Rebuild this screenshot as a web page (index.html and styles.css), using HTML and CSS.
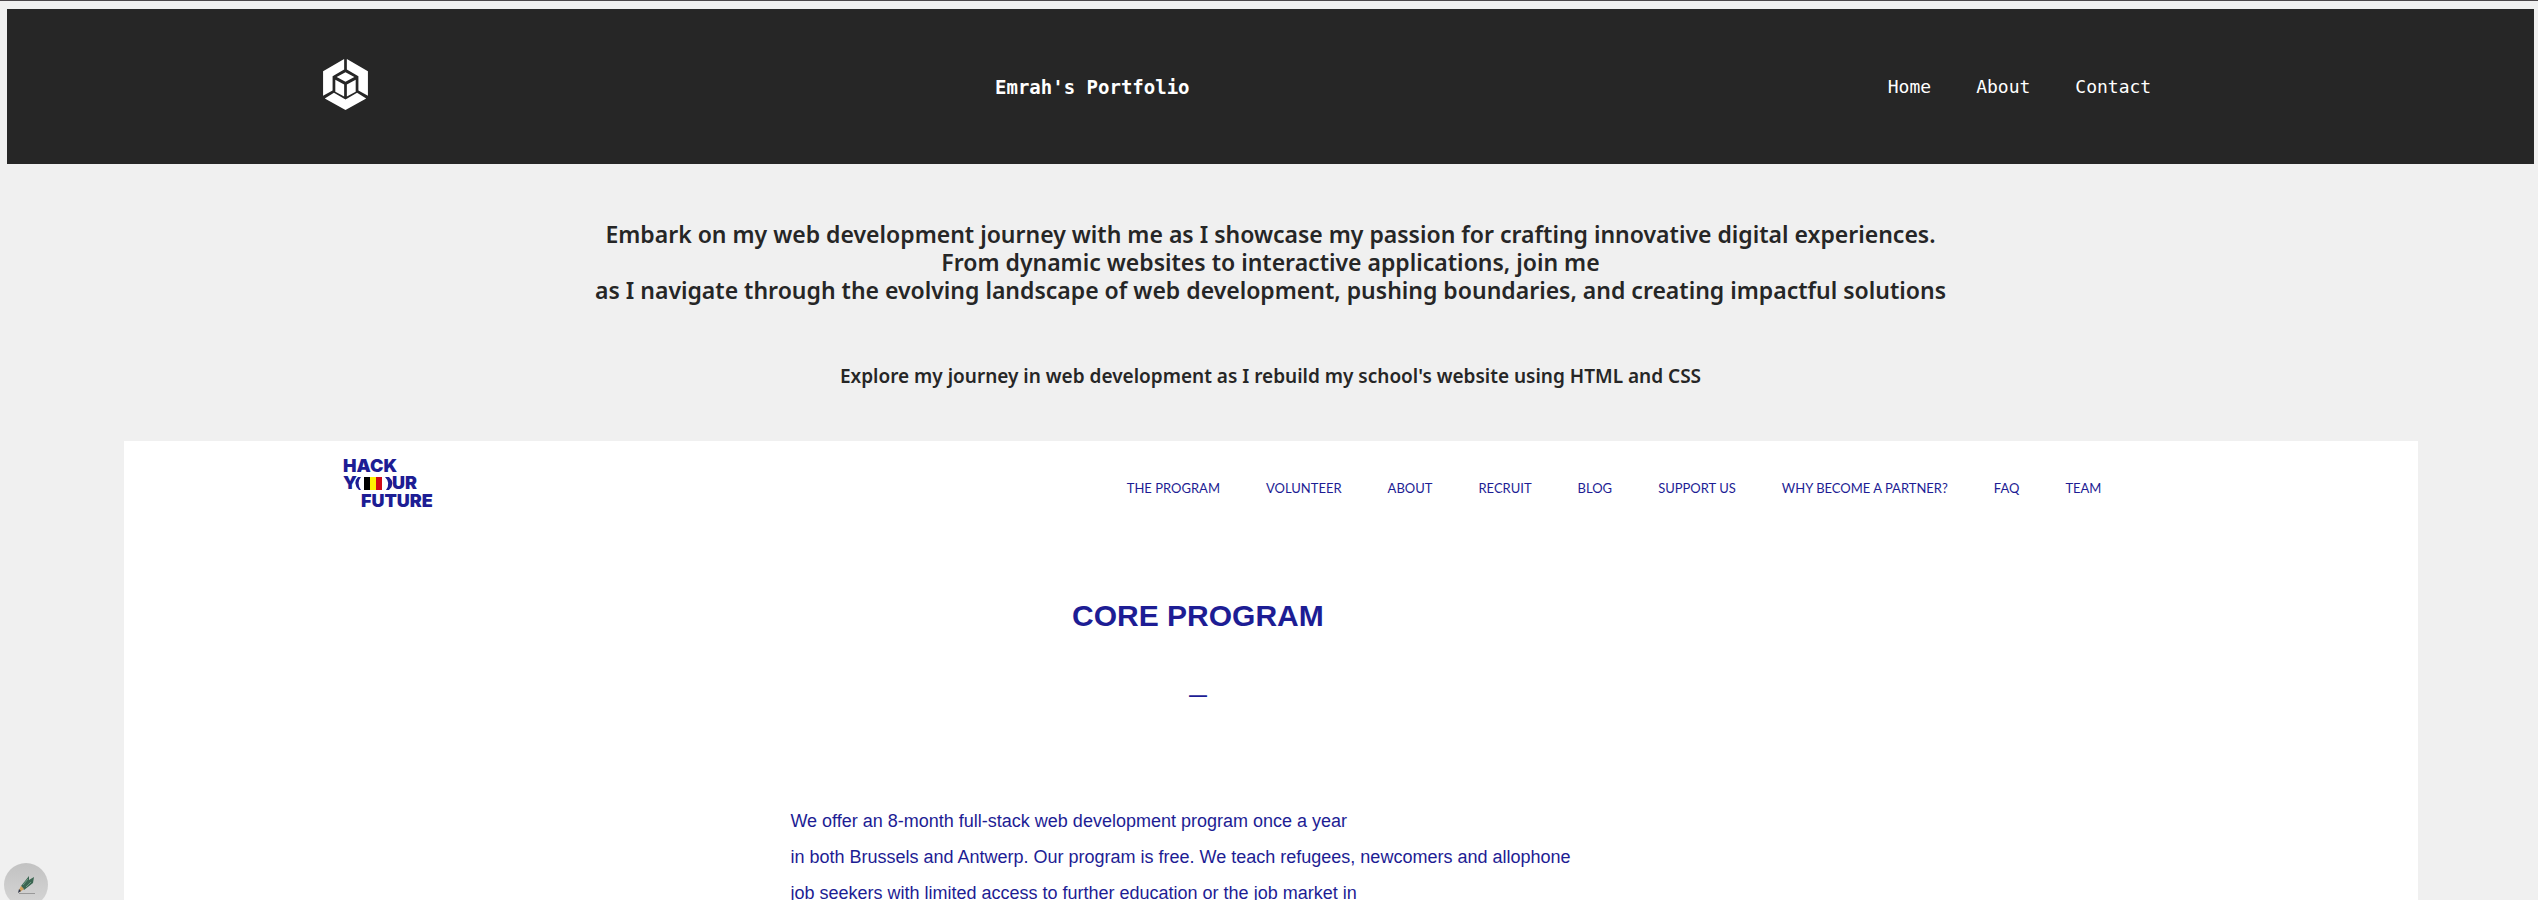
FILE: index.html
```html
<!DOCTYPE html>
<html lang="en">
<head>
<meta charset="utf-8">
<title>Emrah's Portfolio</title>
<link rel="stylesheet" href="styles.css">
</head>
<body>
<header class="site-header">
  <a class="site-logo" href="#" aria-label="Portfolio home">
    <svg class="site-logo-mark" viewBox="66 54 138 156" fill="#fff" aria-hidden="true">
      <path d="M131 57 69 93V165L97 150V108L131 88ZM139 57 201 93V165L173 150V108L139 88ZM74 173 101 156 135 176 169 156 196 173 135 207Z"/>
      <path d="M135 96 161 110 135 124 109 110ZM105 118 131 132V167L105 153ZM165 118 139 132V167L165 153Z"/>
    </svg>
  </a>
  <h1 class="site-title">Emrah's Portfolio</h1>
  <nav class="site-nav">
    <a href="#home">Home</a>
    <a href="#about">About</a>
    <a href="#contact">Contact</a>
  </nav>
</header>

<main class="main">
  <p class="intro">Embark on my web development journey with me as I showcase my passion for crafting innovative digital experiences.<br>From dynamic websites to interactive applications, join me<br>as I navigate through the evolving landscape of web development, pushing boundaries, and creating impactful solutions</p>
  <p class="tagline">Explore my journey in web development as I rebuild my school's website using HTML and CSS</p>

  <section class="school">
    <div class="school-bar">
      <a class="school-logo" href="#" aria-label="Hack Your Future">
        <svg class="school-logo-mark" viewBox="0 0 98 56" aria-hidden="true">
          <g class="school-logo-text">
            <text x="1" y="18">HACK</text>
            <text x="1" y="35">Y</text>
            <text x="50" y="35">UR</text>
            <text x="19" y="53">FUTURE</text>
          </g>
          <path d="M19 23Q14 29 19 36L17 36Q10 29 16 23ZM43 23Q49 29 44 36L47 36Q54 29 47 23Z" fill="#1d1d94"/>
          <path d="M22 23h6v13h-6z" fill="#000"/>
          <path d="M28 23h6v13h-6z" fill="#fff200"/>
          <path d="M34 23h6v13h-6z" fill="#d00a16"/>
        </svg>
      </a>
      <nav class="school-nav">
        <a href="#program">THE PROGRAM</a>
        <a href="#volunteer">VOLUNTEER</a>
        <a href="#about-school">ABOUT</a>
        <a href="#recruit">RECRUIT</a>
        <a href="#blog">BLOG</a>
        <a href="#support">SUPPORT US</a>
        <a href="#partner">WHY BECOME A PARTNER?</a>
        <a href="#faq">FAQ</a>
        <a href="#team">TEAM</a>
      </nav>
    </div>
    <article class="program">
      <h2 class="program-title">CORE PROGRAM</h2>
      <p class="program-dash">—</p>
      <p class="program-text">We offer an 8-month full-stack web development program once a year<br>in both Brussels and Antwerp. Our program is free. We teach refugees, newcomers and allophone<br>job seekers with limited access to further education or the job market in</p>
    </article>
  </section>
</main>

<button class="edit-button" type="button" aria-label="Edit">
  <svg class="edit-icon" viewBox="0 0 20 20" aria-hidden="true">
    <path d="M3 18.500H19" stroke="#999" stroke-width="1"/>
    <path d="M5 11 13 1 13 5 18 2 17 8 8 15Z" fill="#3c6652"/>
    <path d="M7 10 12 4M10 12 15 7" stroke="#6f9c82" stroke-width="1"/>
    <path d="M5 11 8 14 4 17 3 15Z" fill="#d2a15c"/>
    <path d="M3 14 5 16 2 18Z" fill="#2f3645"/>
  </svg>
</button>
</body>
</html>
```

FILE: styles.css
```css
* {
  box-sizing: border-box;
}

body {
  display: flex;
  flex-direction: column;
  height: 100vh;
  margin: 0;
  padding: 8px 4px 0 7px;
  overflow: hidden;
  border-top: 1px solid #4a4649;
  background: #f0f0f0;
  color: #262626;
}

a {
  color: inherit;
  text-decoration: none;
}

.site-header {
  display: grid;
  grid-template-columns: 673fr auto 961fr;
  align-items: center;
  padding: 49px 15.15% 53px 12.45%;
  background: #262626;
  color: #fff;
  font-family: Consolas, "DejaVu Sans Mono", monospace;
}

.site-logo {
  justify-self: start;
}

.site-logo-mark {
  display: block;
  width: 47px;
  height: 53px;
}

.site-title {
  margin: 4px 0 0;
  font-size: 19px;
  line-height: 24px;
}

.site-nav {
  display: flex;
  justify-content: flex-end;
  gap: 45px;
  margin-top: 4px;
  font-size: 18px;
  line-height: 24px;
}

.main {
  display: flex;
  flex: 1;
  flex-direction: column;
  min-height: 0;
}

.intro {
  margin: 56px 0 0;
  font: 600 23px/28px "Trebuchet MS", "Noto Sans", sans-serif;
  text-align: center;
}

.tagline {
  margin: 58px 0 0;
  font: 600 19px/28px "Comic Sans MS", "Noto Sans", sans-serif;
  text-align: center;
}

.school {
  flex: 1;
  min-height: 0;
  margin: 51px 116px 0 117px;
  overflow: hidden;
  background: #fff;
  color: #1d1d94;
}

.school-bar {
  display: flex;
  align-items: center;
  justify-content: space-between;
  padding: 13px 13.8% 0 9.5%;
}

.school-logo-mark {
  display: block;
  width: 98px;
  height: 56px;
}

.school-logo-text {
  fill: #1d1d94;
  font: 900 18px/20px Inter, sans-serif;
}

.school-nav {
  display: flex;
  gap: 46px;
  padding-top: 12px;
  font: 13px/20px "Gill Sans", Lato, sans-serif;
}

.program {
  max-width: 815px;
  margin-left: 29.05%;
  font-family: "Liberation Sans", Arial, sans-serif;
}

.program-title {
  margin: 88px 0 0;
  font-size: 30px;
  line-height: 36px;
  text-align: center;
}

.program-dash {
  margin: 43px 0 0;
  font-size: 18px;
  font-weight: 700;
  line-height: 36px;
  text-align: center;
}

.program-text {
  margin: 90px 0 0;
  font-size: 18px;
  line-height: 36px;
}

.edit-button {
  position: fixed;
  bottom: -7px;
  left: 4px;
  display: grid;
  place-items: center;
  width: 44px;
  height: 44px;
  padding: 0;
  border: 0;
  border-radius: 50%;
  background: linear-gradient(#c2c2c2, #d6d6d6);
}

.edit-icon {
  width: 20px;
  height: 20px;
}
```
